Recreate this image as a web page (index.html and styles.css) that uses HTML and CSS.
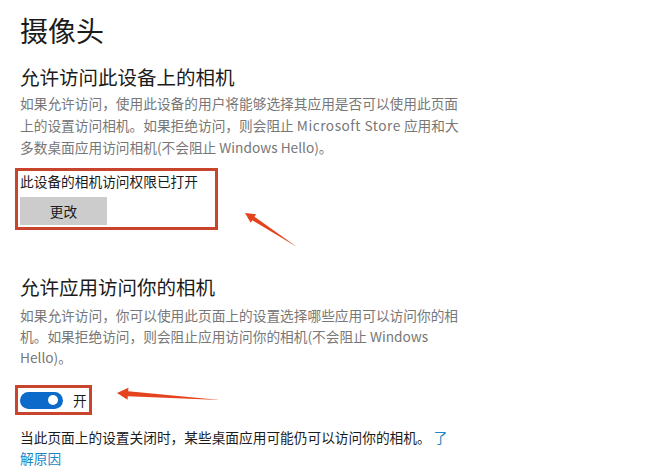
FILE: index.html
```html
<!DOCTYPE html>
<html lang="zh-CN">
<head>
<meta charset="utf-8">
<title>摄像头</title>
<link rel="stylesheet" href="styles.css">
</head>
<body>
<main class="page">
  <h1 class="title">摄像头</h1>

  <h2 class="heading">允许访问此设备上的相机</h2>
  <p class="desc">如果允许访问，使用此设备的用户将能够选择其应用是否可以使用此页面上的设置访问相机。如果拒绝访问，则会阻止 <span class="latin">Microsoft Store</span> 应用和大多数桌面应用访问相机(不会阻止 Windows Hello)。</p>

  <div class="mark mark-device">
    <div class="status">此设备的相机访问权限已打开</div>
    <button class="btn">更改</button>
  </div>

  <h2 class="heading heading-apps">允许应用访问你的相机</h2>
  <p class="desc desc-apps">如果允许访问，你可以使用此页面上的设置选择哪些应用可以访问你的相机。如果拒绝访问，则会阻止应用访问你的相机(不会阻止 Windows Hello)。</p>

  <div class="mark mark-toggle">
    <span class="toggle"><span class="knob"></span></span>
    <span class="toggle-label">开</span>
  </div>

  <p class="note">当此页面上的设置关闭时，某些桌面应用可能仍可以访问你的相机。 <a class="link" href="#">了解原因</a></p>
</main>

<svg class="arrows" width="665" height="468" viewBox="0 0 665 468" xmlns="http://www.w3.org/2000/svg">
  <polygon fill="#e5431e" points="245,213 256.1,214.3 254.5,216.8 297,247 252.3,220.2 250.7,222.7"/>
  <polygon fill="#e5431e" points="117,393 128.4,387.8 128.2,391.3 220,400 127.8,396.2 127.6,399.7"/>
</svg>
</body>
</html>
```

FILE: styles.css
```css
html, body {
  margin: 0;
  padding: 0;
  background: #ffffff;
}

body {
  position: relative;
  width: 665px;
  height: 468px;
  overflow: hidden;
  font-family: "Noto Sans CJK SC", "Noto Sans", "Liberation Sans", sans-serif;
  color: #1b1b1b;
}

.page {
  padding: 12px 0 0 20px;
}

.title {
  margin: 0;
  font-size: 28px;
  line-height: 36px;
  font-weight: 400;
  color: #1b1b1b;
}

.heading {
  margin: 15px 0 0;
  font-size: 19.5px;
  line-height: 28px;
  font-weight: 400;
  color: #1b1b1b;
}

.desc {
  margin: 1px 0 0;
  width: 445px;
  font-size: 13.7px;
  line-height: 22px;
  color: #777777;
}

.latin {
  letter-spacing: 0.5px;
}

.mark {
  box-sizing: border-box;
  border: 3px solid #c9442c;
  margin-left: -5px;
  padding-left: 2px;
}

.mark-device {
  width: 203px;
  margin-top: 10px;
  padding-bottom: 2px;
}

.status {
  font-size: 13.7px;
  line-height: 20px;
  color: #1b1b1b;
}

.btn {
  display: block;
  margin-top: 6px;
  width: 87px;
  height: 28px;
  border: none;
  background: #cccccc;
  font-family: inherit;
  font-size: 13.7px;
  color: #1b1b1b;
  padding: 0;
}

.heading-apps {
  margin-top: 43px;
}

.desc-apps {
  margin-top: 4px;
  line-height: 21px;
}

.mark-toggle {
  width: 77px;
  height: 30px;
  margin-top: 17px;
  display: flex;
  align-items: center;
  gap: 10px;
}

.toggle {
  box-sizing: border-box;
  width: 43px;
  height: 17px;
  border-radius: 9px;
  background: #0c6acb;
  display: flex;
  align-items: center;
  justify-content: flex-end;
  padding-right: 5px;
}

.knob {
  width: 10px;
  height: 10px;
  border-radius: 50%;
  background: #ffffff;
}

.toggle-label {
  font-size: 13.7px;
  line-height: 20px;
  color: #1b1b1b;
}

.note {
  margin: 12px 0 0;
  width: 436px;
  font-size: 13.7px;
  line-height: 21px;
  color: #1b1b1b;
}

.link {
  color: #1f86c6;
  text-decoration: none;
}

.arrows {
  position: absolute;
  left: 0;
  top: 0;
  pointer-events: none;
}
```
